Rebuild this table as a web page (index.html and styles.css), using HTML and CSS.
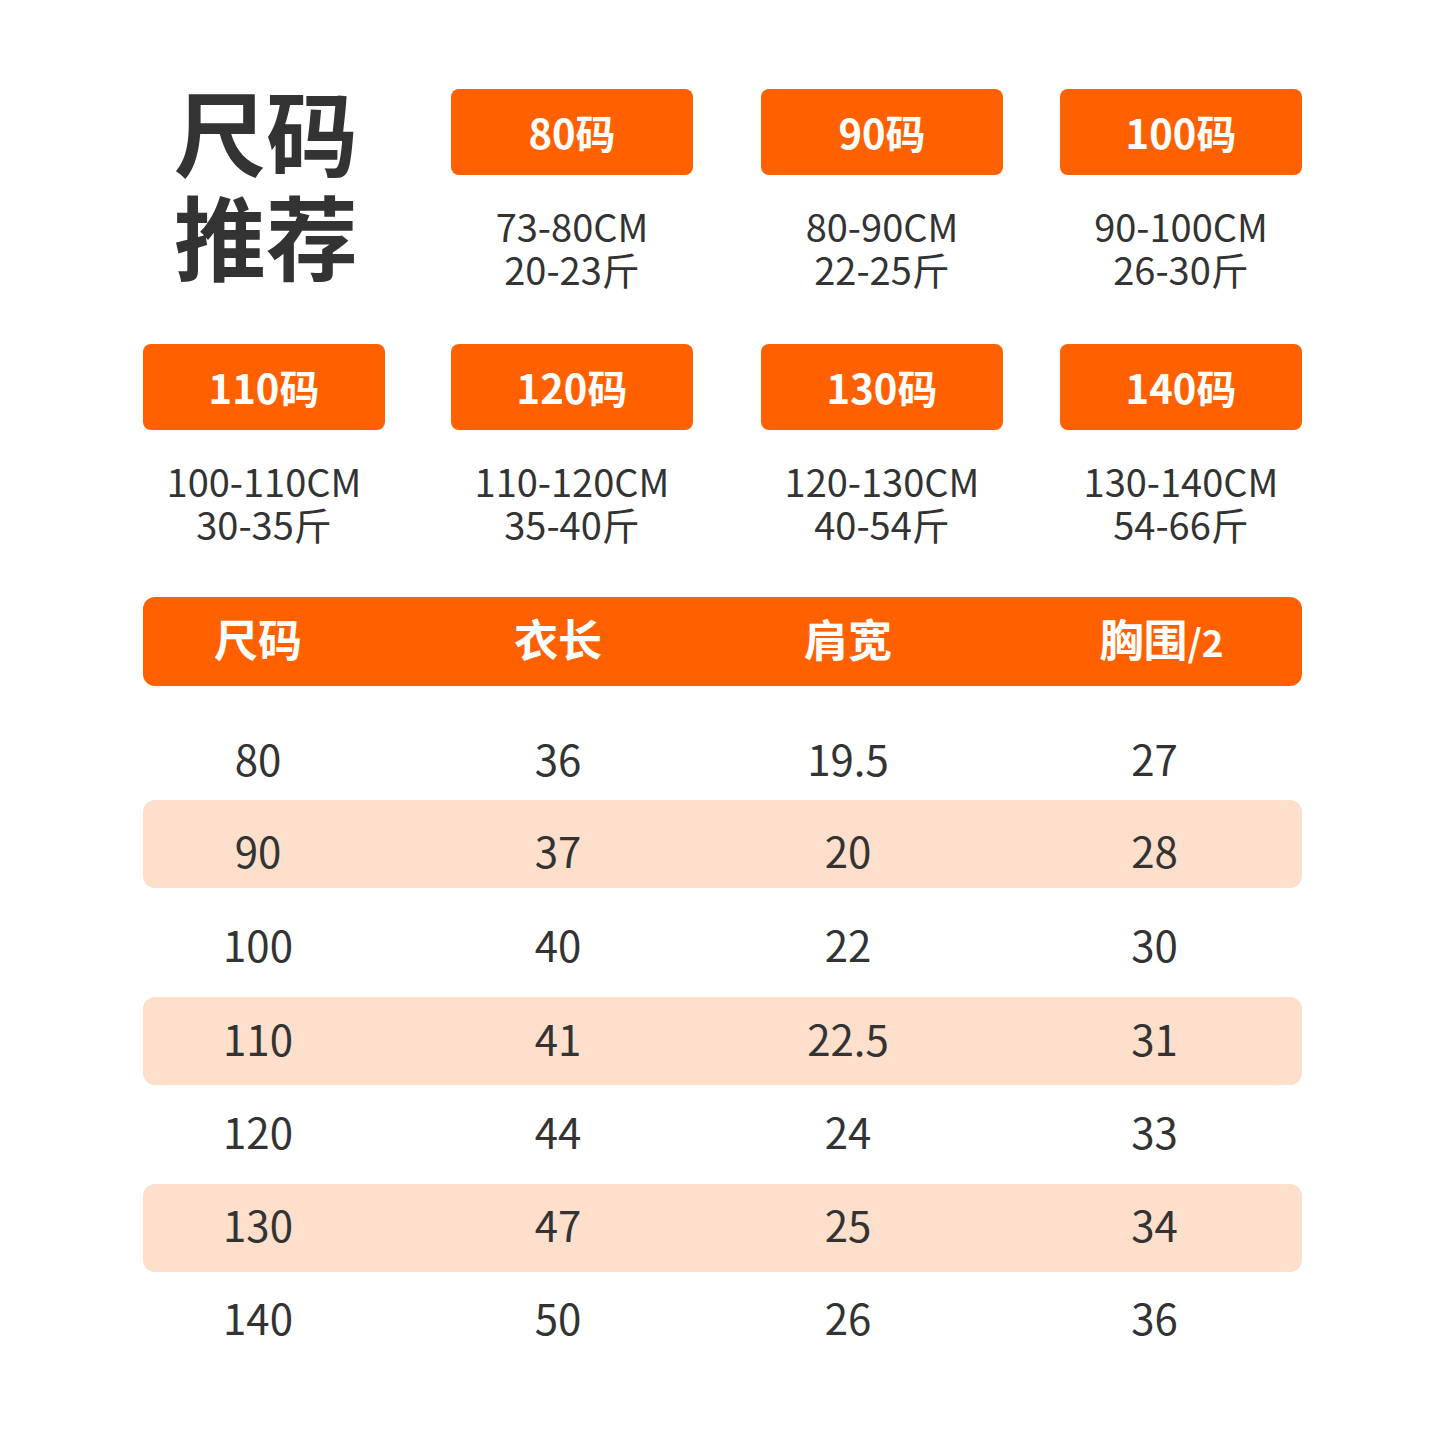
FILE: index.html
```html
<!DOCTYPE html>
<html lang="zh-CN">
<head>
<meta charset="utf-8">
<title>尺码推荐</title>
<link rel="stylesheet" href="styles.css">
</head>
<body>
<div class="page">
  <section class="sizes">
    <div class="title">尺码<br>推荐</div>
    <div class="card"><div class="tag">80码</div><div class="info">73-80CM<br>20-23斤</div></div>
    <div class="card"><div class="tag">90码</div><div class="info">80-90CM<br>22-25斤</div></div>
    <div class="card"><div class="tag">100码</div><div class="info">90-100CM<br>26-30斤</div></div>
    <div class="card"><div class="tag">110码</div><div class="info">100-110CM<br>30-35斤</div></div>
    <div class="card"><div class="tag">120码</div><div class="info">110-120CM<br>35-40斤</div></div>
    <div class="card"><div class="tag">130码</div><div class="info">120-130CM<br>40-54斤</div></div>
    <div class="card"><div class="tag">140码</div><div class="info">130-140CM<br>54-66斤</div></div>
  </section>

  <section class="table">
    <div class="row head"><div class="c">尺码</div><div class="c">衣长</div><div class="c">肩宽</div><div class="c">胸围<span class="small">/2</span></div></div>
    <div class="row first"><div class="c">80</div><div class="c">36</div><div class="c">19.5</div><div class="c">27</div></div>
    <div class="row alt second"><div class="c">90</div><div class="c">37</div><div class="c">20</div><div class="c">28</div></div>
    <div class="row"><div class="c">100</div><div class="c">40</div><div class="c">22</div><div class="c">30</div></div>
    <div class="row alt"><div class="c">110</div><div class="c">41</div><div class="c">22.5</div><div class="c">31</div></div>
    <div class="row"><div class="c">120</div><div class="c">44</div><div class="c">24</div><div class="c">33</div></div>
    <div class="row alt"><div class="c">130</div><div class="c">47</div><div class="c">25</div><div class="c">34</div></div>
    <div class="row"><div class="c">140</div><div class="c">50</div><div class="c">26</div><div class="c">36</div></div>
  </section>
</div>
</body>
</html>
```

FILE: styles.css
```css
html, body {
  margin: 0;
  padding: 0;
  background: #ffffff;
}
body {
  font-family: "Noto Sans CJK SC", "Noto Sans", sans-serif;
  color: #333333;
}
.page {
  width: 1440px;
  box-sizing: border-box;
  padding: 89px 138px 0 143px;
}
.sizes {
  display: grid;
  grid-template-columns: 308px 310px 299px 242px;
  row-gap: 54px;
}
.title {
  width: 242px;
  height: 201px;
  text-align: center;
  font-size: 92px;
  font-weight: 700;
  line-height: 104px;
  margin-top: -11px;
  margin-left: 2px;
  color: #333333;
}
.card {
  width: 242px;
  display: flex;
  flex-direction: column;
  align-items: center;
}
.tag {
  width: 100%;
  height: 86px;
  background: #ff6100;
  border-radius: 8px;
  color: #ffffff;
  font-size: 40px;
  font-weight: 700;
  display: flex;
  align-items: center;
  justify-content: center;
}
.info {
  margin-top: 29px;
  font-size: 38px;
  line-height: 43px;
  text-align: center;
  white-space: nowrap;
}
.table {
  margin-top: 52px;
  display: flex;
  flex-direction: column;
  gap: 5.33px;
}
.row {
  display: grid;
  grid-template-columns: 230px 370px 210px 1fr;
  height: 88px;
  box-sizing: border-box;
  padding-bottom: 8px;
  align-items: center;
  border-radius: 12px;
  font-size: 42px;
}
.row.first {
  height: 78px;
  padding: 2px 0 0;
}
.row.second {
  padding: 10px 0 0;
  margin-bottom: 10px;
}
.row .c {
  text-align: center;
}
.row .c:nth-child(4) {
  padding-left: 54px;
}
.head {
  height: 89px;
  background: #ff6100;
  color: #ffffff;
  font-weight: 700;
  font-size: 44px;
  margin-bottom: 25.7px;
}
.head .c:nth-child(4) {
  padding-left: 68px;
}
.head .small {
  font-size: 37px;
}
.alt {
  background: #fddfcc;
}
```
